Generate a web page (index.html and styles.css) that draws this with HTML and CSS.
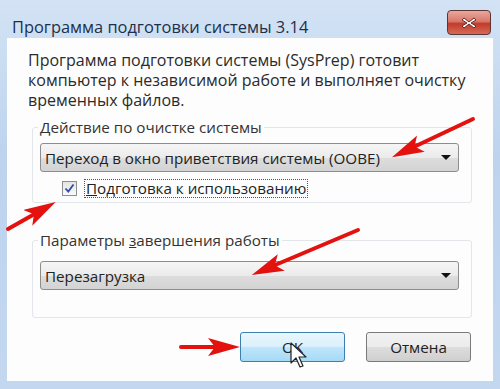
FILE: index.html
```html
<!DOCTYPE html>
<html lang="ru">
<head>
  <meta charset="UTF-8">
  <title>Программа подготовки системы 3.14</title>
  <link rel="stylesheet" href="styles.css">
</head>
<body>

<div class="window">
  <div class="titlebar">
    <span class="title">Программа подготовки системы 3.14</span>
    <span class="btn-close">
      <svg width="16" height="12" viewBox="0 0 16 12">
        <path d="M3,1 L8,5 L13,1 L15,3 L10,6 L15,9 L13,11 L8,7 L3,11 L1,9 L6,6 L1,3 Z" fill="#fff" stroke="#6a2b25" stroke-width="1"/>
      </svg>
    </span>
  </div>

  <div class="content">
    <p class="intro">Программа подготовки системы (SysPrep) готовит компьютер к независимой работе и выполняет очистку временных файлов.</p>

    <fieldset class="group group-action">
      <legend>Действие по очистке системы</legend>
      <div class="select">
        <span>Переход в окно приветствия системы (OOBE)</span>
        <span class="caret"></span>
      </div>
      <div class="check-row">
        <span class="checkbox">
          <svg width="11" height="11" viewBox="0 0 11 11">
            <path d="M1.5,5.5 L4.3,8.6 L9.5,1.5" fill="none" stroke="#2a4fa0" stroke-width="1.8"/>
          </svg>
        </span>
        <span class="check-label"><u>П</u>одготовка к использованию</span>
      </div>
    </fieldset>

    <fieldset class="group group-finish">
      <legend>Параметры <u>з</u>авершения работы</legend>
      <div class="select">
        <span>Перезагрузка</span>
        <span class="caret"></span>
      </div>
    </fieldset>

    <div class="buttons">
      <button class="btn btn-ok">OK</button>
      <button class="btn">Отмена</button>
    </div>
  </div>

  <svg class="overlay" width="500" height="389" viewBox="0 0 500 389">
    <defs>
      <marker id="head" markerUnits="userSpaceOnUse" markerWidth="34" markerHeight="20" refX="22" refY="9" orient="auto">
        <path d="M0,0 L32,9 L0,18 L7,9 Z" fill="#e3120f"/>
      </marker>
    </defs>
    <g stroke="#e3120f" stroke-width="4" stroke-linecap="round" fill="none">
      <line x1="473" y1="119" x2="401" y2="153" marker-end="url(#head)"/>
      <line x1="8" y1="229" x2="47" y2="207" marker-end="url(#head)"/>
      <line x1="358" y1="230" x2="261" y2="271" marker-end="url(#head)"/>
      <line x1="181" y1="347" x2="230" y2="347" marker-end="url(#head)"/>
    </g>
    <path d="M291,343 L291,363 L296,358 L300,367 L303,366 L299,357 L306,357 Z" fill="#fff" stroke="#222" stroke-width="1.2" stroke-linejoin="round"/>
  </svg>
</div>

</body>
</html>
```

FILE: styles.css
```css
body {
  margin: 0;
  font-family: "Open Sans", "Noto Sans", sans-serif;
}
.window {
  position: relative;
  width: 500px;
  height: 389px;
  background: linear-gradient(#d3e3f5, #bdd3ee 40%, #c3d7f0);
  overflow: hidden;
}
.titlebar {
  height: 38px;
  display: flex;
  justify-content: space-between;
  align-items: flex-start;
}
.title {
  margin: 15px 0 0 12px;
  font-size: 16.4px;
  color: #1d2f4a;
}
.btn-close {
  margin: 10px 9px 0 0;
  width: 42px;
  height: 23px;
  border: 1px solid #5b3434;
  border-radius: 4px;
  background: linear-gradient(#e9a89d, #d8786b 45%, #c23b2c 55%, #d66a55);
  display: flex;
  align-items: center;
  justify-content: center;
}
.content {
  margin: 0 7px;
  height: 343px;
  background: #fdfdfd;
  display: flex;
  flex-direction: column;
}
.intro {
  margin: 12px 24px 0 21px;
  font-size: 16px;
  line-height: 20px;
  color: #2b2b2b;
}
.group {
  margin: 7px 21px 0 25px;
  padding: 0 12px 0 7px;
  border: 1px solid #e2e6eb;
  border-radius: 3px;
  min-width: 0;
}
.group legend {
  padding: 0 2px;
  margin-left: -2px;
  font-size: 15.2px;
  line-height: 20px;
  color: #333;
}
.group-action {
  height: 84px;
}
.group-finish {
  margin-top: 27px;
  height: 86px;
}
.group-action .select {
  margin-top: 6px;
}
.group-finish .select {
  margin-top: 11px;
}
.select {
  height: 27px;
  border: 1px solid #8d8d8d;
  border-radius: 3px;
  background: linear-gradient(#f5f5f5, #ebebeb 50%, #dddddd 51%, #d3d3d3);
  display: flex;
  align-items: center;
  justify-content: space-between;
  padding: 0 7px 0 4px;
  font-size: 15.2px;
  color: #222;
}
.caret {
  width: 0;
  height: 0;
  border-left: 5px solid transparent;
  border-right: 5px solid transparent;
  border-top: 5px solid #111;
}
.check-row {
  display: flex;
  align-items: center;
  margin: 7px 0 0 22px;
}
.checkbox {
  width: 13px;
  height: 13px;
  border: 1px solid #8e8f8f;
  background: linear-gradient(#e4e4e4, #fafafa);
  display: flex;
  align-items: center;
  justify-content: center;
}
.check-label {
  margin-left: 7px;
  padding: 0 1px;
  border: 1px dotted #555;
  font-size: 15.2px;
  line-height: 17px;
  color: #222;
}
.buttons {
  display: flex;
  justify-content: flex-end;
  gap: 21px;
  margin: 14px 22px 0 0;
}
.btn {
  width: 105px;
  height: 30px;
  border: 1px solid #7a7a7a;
  border-radius: 3px;
  background: linear-gradient(#f2f2f2, #ebebeb 50%, #dddddd 51%, #cfcfcf);
  font-family: inherit;
  font-size: 15.2px;
  color: #222;
  padding: 0;
}
.btn-ok {
  border-color: #3c7fb1;
  background: linear-gradient(#eaf6fd, #d9f0fc 50%, #bee6fd 51%, #a7d9f5);
}
.overlay {
  position: absolute;
  left: 0;
  top: 0;
}
```
